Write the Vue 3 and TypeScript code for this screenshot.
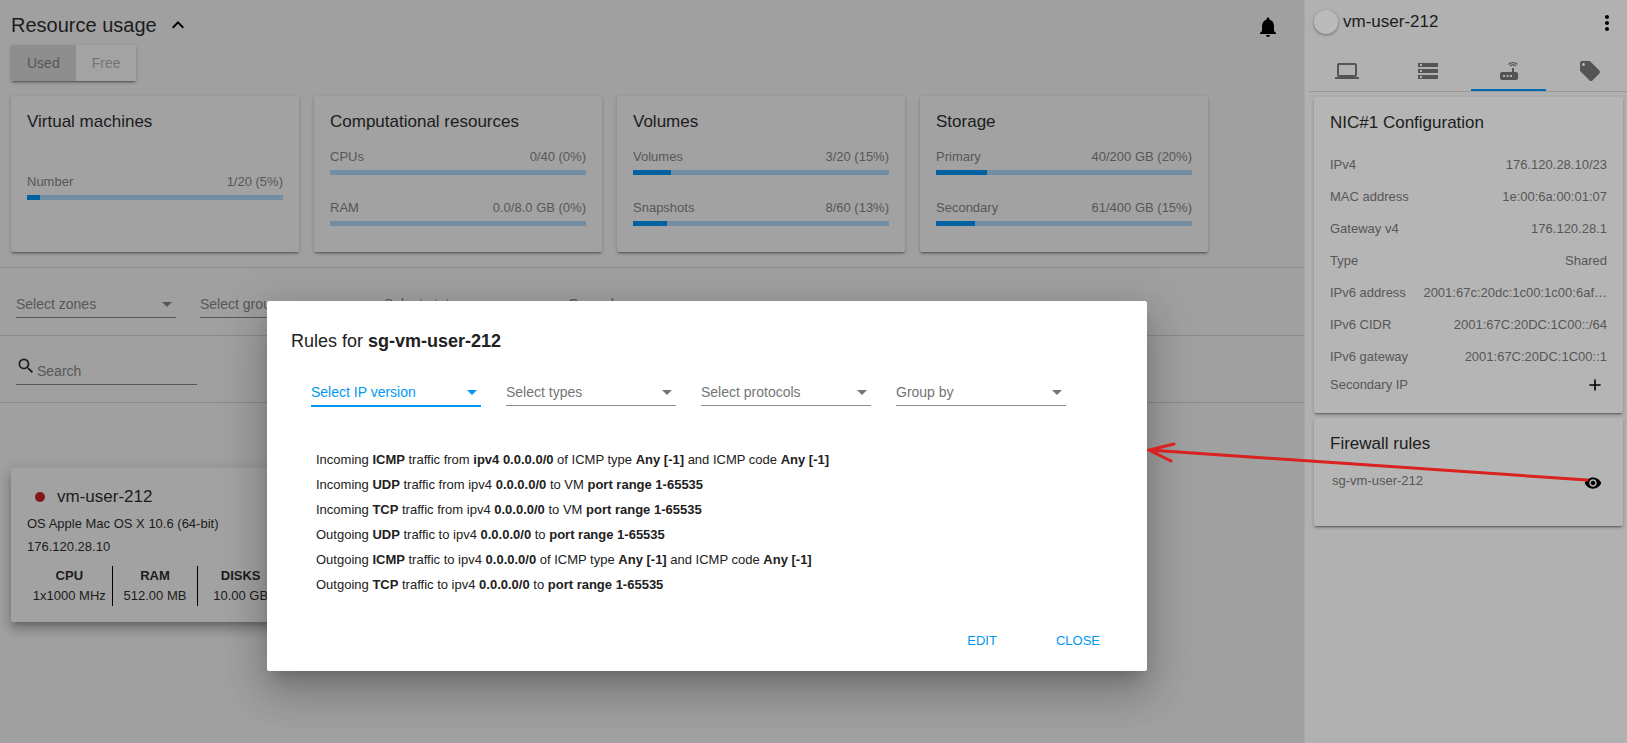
<script setup lang="ts">
import { ref } from 'vue'

interface Usage { label: string; value: string; percent: number }
interface UsageCard { title: string; items: Usage[] }
interface RulePart { text: string; bold?: boolean }

const usageCards: UsageCard[] = [
  { title: 'Virtual machines', items: [{ label: 'Number', value: '1/20 (5%)', percent: 5 }] },
  {
    title: 'Computational resources',
    items: [
      { label: 'CPUs', value: '0/40 (0%)', percent: 0 },
      { label: 'RAM', value: '0.0/8.0 GB (0%)', percent: 0 },
    ],
  },
  {
    title: 'Volumes',
    items: [
      { label: 'Volumes', value: '3/20 (15%)', percent: 15 },
      { label: 'Snapshots', value: '8/60 (13%)', percent: 13.3 },
    ],
  },
  {
    title: 'Storage',
    items: [
      { label: 'Primary', value: '40/200 GB (20%)', percent: 20 },
      { label: 'Secondary', value: '61/400 GB (15%)', percent: 15.2 },
    ],
  },
]

const pageFilters = ['Select zones', 'Select groups', 'Select states', 'Group by']
const ruleFilters = ['Select IP version', 'Select types', 'Select protocols', 'Group by']

const specs = [
  { name: 'CPU', value: '1x1000 MHz' },
  { name: 'RAM', value: '512.00 MB' },
  { name: 'DISKS', value: '10.00 GB' },
]

const nic = [
  { label: 'IPv4', value: '176.120.28.10/23' },
  { label: 'MAC address', value: '1e:00:6a:00:01:07' },
  { label: 'Gateway v4', value: '176.120.28.1' },
  { label: 'Type', value: 'Shared' },
  { label: 'IPv6 address', value: '2001:67c:20dc:1c00:1c00:6af…' },
  { label: 'IPv6 CIDR', value: '2001:67C:20DC:1C00::/64' },
  { label: 'IPv6 gateway', value: '2001:67C:20DC:1C00::1' },
]

const tabs = [
  { name: 'Details', icon: 'M4,6H20V16H4M20,18A2,2 0 0,0 22,16V6C22,4.89 21.1,4 20,4H4C2.89,4 2,4.89 2,6V16A2,2 0 0,0 4,18H0V20H24V18H20Z' },
  { name: 'Storage', icon: 'M2 20h20v-4H2v4zm2-3h2v2H4v-2zM2 4v4h20V4H2zm4 3H4V5h2v2zm-4 7h20v-4H2v4zm2-3h2v2H4v-2z' },
  { name: 'Network', icon: 'M20.2,5.9L21,5.1C19.6,3.7 17.8,3 16,3C14.2,3 12.4,3.7 11,5.1L11.8,5.9C13,4.8 14.5,4.2 16,4.2C17.5,4.2 19,4.8 20.2,5.9M19.3,6.7C18.4,5.8 17.2,5.3 16,5.3C14.8,5.3 13.6,5.8 12.7,6.7L13.5,7.5C14.2,6.8 15.1,6.5 16,6.5C16.9,6.5 17.8,6.8 18.5,7.5L19.3,6.7M19,13H17V9H15V13H5A2,2 0 0,0 3,15V19A2,2 0 0,0 5,21H19A2,2 0 0,0 21,19V15A2,2 0 0,0 19,13M8,18H6V16H8V18M11.5,18H9.5V16H11.5V18M15,18H13V16H15V18Z' },
  { name: 'Tags', icon: 'M21.41 11.58l-9-9C12.05 2.22 11.55 2 11 2H4c-1.1 0-2 .9-2 2v7c0 .55.22 1.05.59 1.42l9 9c.36.36.86.58 1.41.58.55 0 1.05-.22 1.41-.59l7-7c.37-.36.59-.86.59-1.41 0-.55-.23-1.06-.59-1.42zM5.5 7C4.67 7 4 6.33 4 5.5S4.67 4 5.5 4 7 4.67 7 5.5 6.33 7 5.5 7z' },
]

// Text between asterisks is set in bold.
function parse(line: string): RulePart[] {
  return line.split('*').map((text, i) => ({ text, bold: i % 2 === 1 }))
}

const rules = [
  'Incoming *ICMP* traffic from *ipv4 0.0.0.0/0* of ICMP type *Any [-1]* and ICMP code *Any [-1]*',
  'Incoming *UDP* traffic from ipv4 *0.0.0.0/0* to VM *port range 1-65535*',
  'Incoming *TCP* traffic from ipv4 *0.0.0.0/0* to VM *port range 1-65535*',
  'Outgoing *UDP* traffic to ipv4 *0.0.0.0/0* to *port range 1-65535*',
  'Outgoing *ICMP* traffic to ipv4 *0.0.0.0/0* of ICMP type *Any [-1]* and ICMP code *Any [-1]*',
  'Outgoing *TCP* traffic to ipv4 *0.0.0.0/0* to *port range 1-65535*',
].map(parse)

const mode = ref<'Used' | 'Free'>('Used')
const activeTab = ref('Network')
const query = ref('')
</script>

<template>
  <div class="app">
    <main class="content">
      <section class="usage">
        <header class="usage-head">
          <h1>Resource usage</h1>
          <button class="icon-btn" aria-label="Collapse">
            <svg width="24" height="24" viewBox="0 0 24 24"><path d="M7.41 15.41L12 10.83l4.59 4.58L18 14l-6-6-6 6z" /></svg>
          </button>
          <button class="icon-btn bell" aria-label="Notifications">
            <svg width="24" height="24" viewBox="0 0 24 24"><path d="M12 22c1.1 0 2-.9 2-2h-4c0 1.1.89 2 2 2zm6-6v-5c0-3.07-1.64-5.64-4.5-6.32V4c0-.83-.67-1.5-1.5-1.5s-1.5.67-1.5 1.5v.68C7.63 5.36 6 7.92 6 11v5l-2 2v1h16v-1l-2-2z" /></svg>
          </button>
        </header>
        <div class="toggle">
          <button :class="{ on: mode === 'Used' }" @click="mode = 'Used'">Used</button>
          <button :class="{ on: mode === 'Free' }" @click="mode = 'Free'">Free</button>
        </div>
        <div class="usage-cards">
          <article v-for="card in usageCards" :key="card.title" class="card usage-card">
            <h2>{{ card.title }}</h2>
            <div class="meters">
              <div v-for="item in card.items" :key="item.label">
                <div class="pair"><span>{{ item.label }}</span><span>{{ item.value }}</span></div>
                <div class="track"><div class="fill" :style="{ width: item.percent + '%' }"></div></div>
              </div>
            </div>
          </article>
        </div>
      </section>

      <section class="filters">
        <div v-for="name in pageFilters" :key="name" class="select">
          <select :aria-label="name"><option>{{ name }}</option></select>
          <svg width="10" height="5" viewBox="0 0 10 5"><path d="M0 0h10L5 5z" /></svg>
        </div>
      </section>

      <section class="search-row">
        <label class="search">
          <svg width="20" height="20" viewBox="0 0 24 24"><path d="M9.5,3A6.5,6.5 0 0,1 16,9.5C16,11.11 15.41,12.59 14.44,13.73L14.71,14H15.5L20.5,19L19,20.5L14,15.5V14.71L13.73,14.44C12.59,15.41 11.11,16 9.5,16A6.5,6.5 0 0,1 3,9.5A6.5,6.5 0 0,1 9.5,3M9.5,5C7,5 5,7 5,9.5C5,12 7,14 9.5,14C12,14 14,12 14,9.5C14,7 12,5 9.5,5Z" /></svg>
          <input v-model="query" type="text" placeholder="Search" aria-label="Search" />
        </label>
      </section>

      <section class="vms">
        <article class="card vm-card">
          <h2><span class="dot"></span>vm-user-212</h2>
          <p>OS Apple Mac OS X 10.6 (64-bit)</p>
          <p>176.120.28.10</p>
          <dl class="specs">
            <div v-for="s in specs" :key="s.name"><dt>{{ s.name }}</dt><dd>{{ s.value }}</dd></div>
          </dl>
        </article>
      </section>
    </main>

    <aside class="sidebar">
      <header class="side-head">
        <span class="avatar"></span>
        <h2>vm-user-212</h2>
        <button class="icon-btn more" aria-label="More">
          <svg width="24" height="24" viewBox="0 0 24 24"><path d="M12 8c1.1 0 2-.9 2-2s-.9-2-2-2-2 .9-2 2 .9 2 2 2zm0 2c-1.1 0-2 .9-2 2s.9 2 2 2 2-.9 2-2-.9-2-2-2zm0 6c-1.1 0-2 .9-2 2s.9 2 2 2 2-.9 2-2-.9-2-2-2z" /></svg>
        </button>
      </header>
      <nav class="tabs">
        <button v-for="t in tabs" :key="t.name" :aria-label="t.name" :class="{ active: activeTab === t.name }" @click="activeTab = t.name">
          <svg width="24" height="24" viewBox="0 0 24 24"><path :d="t.icon" /></svg>
        </button>
      </nav>
      <div class="side-cards">
        <article class="card side-card nic">
          <h2>NIC#1 Configuration</h2>
          <div v-for="row in nic" :key="row.label" class="pair nic-row">
            <span>{{ row.label }}</span><span>{{ row.value }}</span>
          </div>
          <div class="pair secondary">
            <span>Secondary IP</span>
            <button class="icon-btn" aria-label="Add secondary IP">
              <svg width="24" height="24" viewBox="-3 -3 30 30"><path d="M19 13h-6v6h-2v-6H5v-2h6V5h2v6h6v2z" /></svg>
            </button>
          </div>
        </article>
        <article class="card side-card firewall">
          <h2>Firewall rules</h2>
          <div class="pair group">
            <span>sg-vm-user-212</span>
            <button class="icon-btn" aria-label="View rules">
              <svg width="18" height="18" viewBox="0 0 24 24"><path d="M12 4.5C7 4.5 2.73 7.61 1 12c1.73 4.39 6 7.5 11 7.5s9.27-3.11 11-7.5c-1.73-4.39-6-7.5-11-7.5zM12 17c-2.76 0-5-2.24-5-5s2.24-5 5-5 5 2.24 5 5-2.24 5-5 5zm0-8c-1.66 0-3 1.34-3 3s1.34 3 3 3 3-1.34 3-3-1.34-3-3-3z" /></svg>
            </button>
          </div>
        </article>
      </div>
    </aside>

    <div class="overlay">
      <div class="dialog" role="dialog" aria-labelledby="rules-title">
        <h3 id="rules-title">Rules for <b>sg-vm-user-212</b></h3>
        <div class="rule-filters">
          <div v-for="(name, i) in ruleFilters" :key="name" class="select" :class="{ focused: i === 0 }">
            <select :aria-label="name"><option>{{ name }}</option></select>
            <svg width="10" height="5" viewBox="0 0 10 5"><path d="M0 0h10L5 5z" /></svg>
          </div>
        </div>
        <ul class="rules">
          <li v-for="(rule, i) in rules" :key="i">
            <template v-for="(part, j) in rule" :key="j"><b v-if="part.bold">{{ part.text }}</b><template v-else>{{ part.text }}</template></template>
          </li>
        </ul>
        <div class="actions">
          <button>EDIT</button>
          <button>CLOSE</button>
        </div>
        <svg class="arrow" width="450" height="50" viewBox="0 0 450 50">
          <path d="M440 39L2 9M27 3L2 9L24 20" />
        </svg>
      </div>
    </div>
  </div>
</template>

<style>
body {
  margin: 0;
}
</style>

<style scoped>
* {
  box-sizing: border-box;
}

.app {
  position: relative;
  display: flex;
  min-height: 100vh;
  overflow: hidden;
  background: #a0a0a0;
  color: #1c1c1c;
  font-family: 'Liberation Sans', Arial, sans-serif;
  font-size: 14px;
}

h1, h2, h3, p, ul, dl, dd {
  margin: 0;
  padding: 0;
  font-weight: 400;
}

h2 {
  font-size: 17px;
  line-height: 20px;
}

button, select, input {
  margin: 0;
  padding: 0;
  border: 0;
  background: none;
  color: inherit;
  font: inherit;
  outline: none;
}

svg {
  display: block;
  fill: currentColor;
}

.icon-btn {
  color: #000;
}

.card {
  border-radius: 2px;
  background: #a2a2a2;
  box-shadow: 0 3px 1px -2px rgba(0, 0, 0, 0.2), 0 2px 2px 0 rgba(0, 0, 0, 0.16), 0 1px 4px 0 rgba(0, 0, 0, 0.14);
}

.content {
  flex: 1;
  min-width: 0;
}

.usage {
  padding: 11px 11px 15px;
}

.usage-head {
  display: flex;
  align-items: center;
  height: 28px;
}

.usage-head h1 {
  margin-right: 9px;
  font-size: 20px;
}

.bell {
  margin: 4px 13px 0 auto;
}

.toggle {
  display: inline-flex;
  height: 36px;
  margin-top: 6px;
  overflow: hidden;
  border-radius: 2px;
  color: #757575;
  box-shadow: 0 3px 1px -2px rgba(0, 0, 0, 0.2), 0 2px 2px 0 rgba(0, 0, 0, 0.16), 0 1px 4px 0 rgba(0, 0, 0, 0.14);
}

.toggle button {
  padding: 0 16px;
  background: #a3a3a3;
}

.toggle .on {
  background: #8e8e8e;
  color: #575757;
}

.usage-cards {
  display: flex;
  gap: 15px;
  margin-top: 15px;
}

.usage-card {
  display: flex;
  flex-direction: column;
  width: 288px;
  height: 156px;
  padding: 16px;
}

.meters {
  display: flex;
  flex: 1;
  flex-direction: column;
  justify-content: center;
  gap: 25px;
  padding-top: 6px;
}

.pair {
  display: flex;
  justify-content: space-between;
  color: #575757;
  font-size: 13px;
  line-height: 16px;
  white-space: nowrap;
}

.track {
  height: 5px;
  margin-top: 5px;
  background: #738da3;
}

.fill {
  height: 100%;
  background: #0062a1;
}

.filters {
  display: flex;
  gap: 24px;
  height: 69px;
  padding: 20px 16px 0;
  border-top: 1px solid #898989;
  border-bottom: 1px solid #898989;
}

.select {
  display: flex;
  align-items: center;
  width: 160px;
  height: 30px;
  padding: 3px 4px 0 0;
  border-bottom: 1px solid #575757;
  color: #575757;
}

.select select {
  flex: 1;
  min-width: 0;
  height: 26px;
  appearance: none;
}

.search-row {
  height: 67px;
  padding: 20px 16px 0;
  border-bottom: 1px solid #898989;
}

.search {
  display: flex;
  width: 181px;
  height: 29px;
  border-bottom: 1px solid #575757;
}

.search input {
  flex: 1;
  min-width: 0;
  padding-top: 1px;
  margin-left: 1px;
}

.search input::placeholder {
  color: #575757;
  opacity: 1;
}

.vms {
  padding: 65px 11px 0;
}

.vm-card {
  width: 288px;
  height: 154px;
  padding: 19px 16px 0;
  font-size: 13px;
  box-shadow: 0 5px 5px -3px rgba(0, 0, 0, 0.2), 0 8px 10px 1px rgba(0, 0, 0, 0.14), 0 3px 14px 2px rgba(0, 0, 0, 0.12);
}

.vm-card h2 {
  display: flex;
  align-items: center;
  margin-bottom: 5px;
}

.vm-card p {
  line-height: 23px;
}

.dot {
  width: 10px;
  height: 10px;
  margin: 0 12px 0 8px;
  border-radius: 50%;
  background: #83151b;
}

.specs {
  display: flex;
  height: 40px;
  margin-top: 8px;
  line-height: 20px;
  text-align: center;
  white-space: nowrap;
}

.specs div {
  flex: 1 1 0;
}

.specs div + div {
  border-left: 1px solid #000;
}

.specs dt {
  font-weight: 700;
}

.sidebar {
  width: 323px;
  padding-left: 4px;
  border-left: 1px solid #a8a8a8;
  background: #b1b1b1;
}

.side-head {
  display: flex;
  align-items: flex-start;
  height: 50px;
  padding: 10px 8px 0 5px;
}

.side-head h2 {
  line-height: 24px;
}

.avatar {
  width: 24px;
  height: 24px;
  margin-right: 5px;
  border-radius: 50%;
  background: #bbb;
  box-shadow: 0 1px 3px rgba(0, 0, 0, 0.4);
}

.more {
  margin: 1px 0 0 auto;
}

.tabs {
  display: flex;
  justify-content: space-between;
  height: 42px;
  border-bottom: 1px solid #999;
}

.tabs button {
  display: flex;
  justify-content: center;
  width: 75px;
  padding-top: 9px;
  border-bottom: 2px solid transparent;
  color: #545454;
}

.tabs .active {
  border-color: #006aae;
}

.side-cards {
  display: grid;
  grid-template-columns: minmax(0, 1fr);
  gap: 5px;
  padding: 5px 4px 5px 5px;
}

.side-card {
  padding: 16px 16px 0;
  background: #b5b5b5;
}

.nic {
  height: 316px;
}

.nic h2 {
  margin-bottom: 16px;
}

.nic-row {
  line-height: 32px;
}

.secondary {
  align-items: center;
  height: 24px;
}

.firewall {
  height: 108px;
}

.group {
  margin-top: 19px;
  padding: 0 5px 0 2px;
}

.group .icon-btn {
  margin-top: 1px;
}

.overlay {
  position: absolute;
  inset: 0;
  display: flex;
  align-items: center;
  justify-content: center;
  padding: 229px 213px 0 0;
}

.dialog {
  position: relative;
  width: 880px;
  height: 370px;
  padding: 28px 24px 0;
  border-radius: 2px;
  background: #fff;
  color: #212121;
  box-shadow: 0 11px 15px -7px rgba(0, 0, 0, 0.2), 0 24px 38px 3px rgba(0, 0, 0, 0.14), 0 9px 46px 8px rgba(0, 0, 0, 0.12);
}

.dialog h3 {
  font-size: 18px;
  line-height: 24px;
}

.rule-filters {
  display: flex;
  gap: 25px;
  padding: 23px 20px 0;
}

.rule-filters .select {
  width: 170px;
  height: 30px;
  border-color: #8c8c8c;
  color: #757575;
}

.rule-filters .focused {
  height: 31px;
  border-bottom: 2px solid #0097f5;
  color: #0097f5;
}

.rules {
  padding: 40px 25px 0;
  list-style: none;
  font-size: 13px;
  line-height: 25px;
}

.actions {
  display: flex;
  justify-content: flex-end;
  gap: 27px;
  margin-top: 25px;
  padding-right: 7px;
  color: #0097f5;
}

.actions button {
  height: 36px;
  padding: 0 16px;
  font-size: 13px;
}

.arrow {
  position: absolute;
  top: 140px;
  left: 880px;
  fill: none;
  stroke: #d9211f;
  stroke-width: 3;
  stroke-linecap: round;
  pointer-events: none;
}
</style>
